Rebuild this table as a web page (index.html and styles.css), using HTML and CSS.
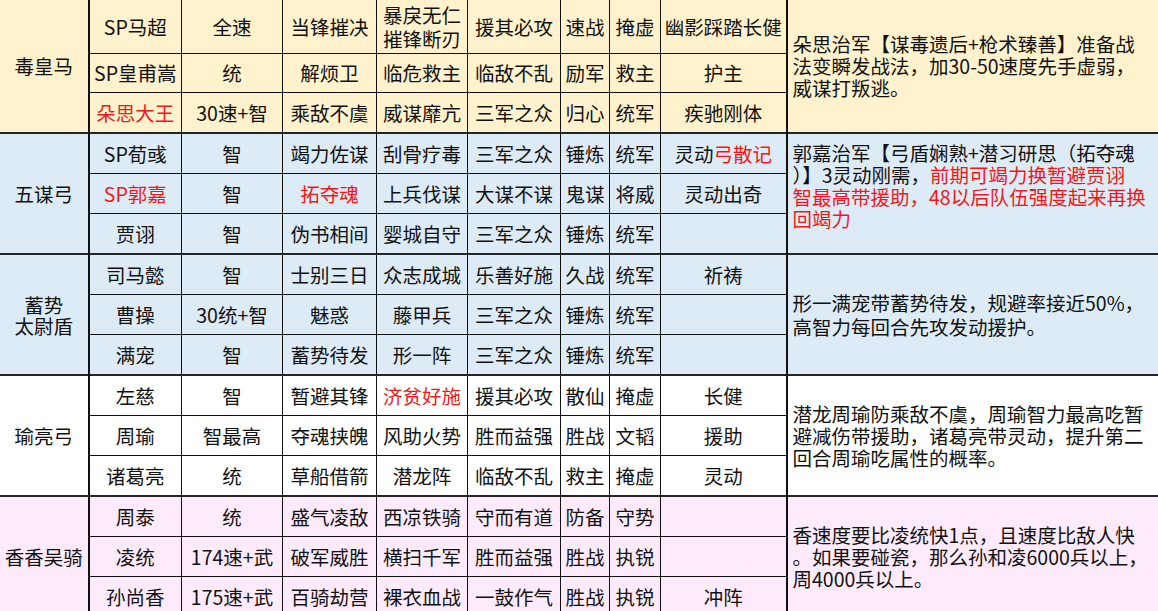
FILE: index.html
```html
<!DOCTYPE html>
<html lang="zh-CN">
<head>
<meta charset="utf-8">
<title>阵容表</title>
<link rel="stylesheet" href="styles.css">
</head>
<body>
<table class="grid">
  <colgroup>
    <col class="c0"><col class="c1"><col class="c2"><col class="c3"><col class="c4">
    <col class="c5"><col class="c6"><col class="c7"><col class="c8"><col class="c9">
  </colgroup>
  <tbody class="g g-cream first">
    <tr class="tall">
      <td class="team" rowspan="3">毒皇马</td>
      <td>SP马超</td><td>全速</td><td>当锋摧决</td><td class="two"><span class="ln">暴戾无仁</span><span class="ln">摧锋断刃</span></td><td>援其必攻</td><td>速战</td><td>掩虚</td><td>幽影踩踏长健</td>
      <td class="note" rowspan="3"><span class="ln">朵思治军【谋毒遗后+枪术臻善】准备战</span><span class="ln">法变瞬发战法，加30-50速度先手虚弱，</span><span class="ln">威谋打叛逃。</span></td>
    </tr>
    <tr class="r39">
      <td>SP皇甫嵩</td><td>统</td><td>解烦卫</td><td>临危救主</td><td>临敌不乱</td><td>励军</td><td>救主</td><td>护主</td>
    </tr>
    <tr>
      <td class="red">朵思大王</td><td>30速+智</td><td>乘敌不虞</td><td>威谋靡亢</td><td>三军之众</td><td>归心</td><td>统军</td><td>疾驰刚体</td>
    </tr>
  </tbody>
  <tbody class="g g-blue">
    <tr>
      <td class="team" rowspan="3">五谋弓</td>
      <td>SP荀彧</td><td>智</td><td>竭力佐谋</td><td>刮骨疗毒</td><td>三军之众</td><td>锤炼</td><td>统军</td><td>灵动<span class="red">弓散记</span></td>
      <td class="note up" rowspan="3"><span class="ln">郭嘉治军【弓盾娴熟+潜习研思（拓夺魂</span><span class="ln">）】3灵动刚需，<span class="red">前期可竭力换暂避贾诩</span></span><span class="ln red">智最高带援助，48以后队伍强度起来再换</span><span class="ln red">回竭力</span></td>
    </tr>
    <tr>
      <td class="red">SP郭嘉</td><td>智</td><td class="red">拓夺魂</td><td>上兵伐谋</td><td>大谋不谋</td><td>鬼谋</td><td>将威</td><td>灵动出奇</td>
    </tr>
    <tr>
      <td>贾诩</td><td>智</td><td>伪书相间</td><td>婴城自守</td><td>三军之众</td><td>锤炼</td><td>统军</td><td></td>
    </tr>
  </tbody>
  <tbody class="g g-blue">
    <tr>
      <td class="team two tight" rowspan="3"><span class="ln">蓄势</span><span class="ln">太尉盾</span></td>
      <td>司马懿</td><td>智</td><td>士别三日</td><td>众志成城</td><td>乐善好施</td><td>久战</td><td>统军</td><td>祈祷</td>
      <td class="note" rowspan="3"><span class="ln wide">形一满宠带蓄势待发，规避率接近50%，</span><span class="ln wide">高智力每回合先攻发动援护。</span></td>
    </tr>
    <tr>
      <td>曹操</td><td>30统+智</td><td>魅惑</td><td>藤甲兵</td><td>三军之众</td><td>锤炼</td><td>统军</td><td></td>
    </tr>
    <tr>
      <td>满宠</td><td>智</td><td>蓄势待发</td><td>形一阵</td><td>三军之众</td><td>锤炼</td><td>统军</td><td></td>
    </tr>
  </tbody>
  <tbody class="g g-white">
    <tr>
      <td class="team" rowspan="3">瑜亮弓</td>
      <td>左慈</td><td>智</td><td>暂避其锋</td><td class="red">济贫好施</td><td>援其必攻</td><td>散仙</td><td>掩虚</td><td>长健</td>
      <td class="note" rowspan="3"><span class="ln">潜龙周瑜防乘敌不虞，周瑜智力最高吃暂</span><span class="ln">避减伤带援助，诸葛亮带灵动，提升第二</span><span class="ln">回合周瑜吃属性的概率。</span></td>
    </tr>
    <tr>
      <td>周瑜</td><td>智最高</td><td>夺魂挟魄</td><td>风助火势</td><td>胜而益强</td><td>胜战</td><td>文韬</td><td>援助</td>
    </tr>
    <tr>
      <td>诸葛亮</td><td>统</td><td>草船借箭</td><td>潜龙阵</td><td>临敌不乱</td><td>救主</td><td>掩虚</td><td>灵动</td>
    </tr>
  </tbody>
  <tbody class="g g-pink">
    <tr>
      <td class="team" rowspan="3">香香吴骑</td>
      <td>周泰</td><td>统</td><td>盛气凌敌</td><td>西凉铁骑</td><td>守而有道</td><td>防备</td><td>守势</td><td></td>
      <td class="note" rowspan="3"><span class="ln">香速度要比凌统快1点，且速度比敌人快</span><span class="ln">。如果要碰瓷，那么孙和凌6000兵以上，</span><span class="ln">周4000兵以上。</span></td>
    </tr>
    <tr>
      <td>凌统</td><td>174速+武</td><td>破军威胜</td><td>横扫千军</td><td>胜而益强</td><td>胜战</td><td>执锐</td><td></td>
    </tr>
    <tr>
      <td>孙尚香</td><td>175速+武</td><td>百骑劫营</td><td>裸衣血战</td><td>一鼓作气</td><td>胜战</td><td>执锐</td><td>冲阵</td>
    </tr>
  </tbody>
</table>
</body>
</html>
```

FILE: styles.css
```css
html, body {
  margin: 0;
  padding: 0;
  background: #ffffff;
  overflow: hidden;
}

.grid {
  border-collapse: collapse;
  table-layout: fixed;
  width: 1166px;
  margin: -1px 0 0 -1px;
  font-family: "Noto Sans CJK SC", "Noto Sans", sans-serif;
  font-size: 19.5px;
  color: #111111;
}

.c0 { width: 89px; }
.c1 { width: 93px; }
.c2 { width: 101px; }
.c3 { width: 94px; }
.c4 { width: 91px; }
.c5 { width: 93px; }
.c6 { width: 49px; }
.c7 { width: 51px; }
.c8 { width: 126px; }
.c9 { width: 379px; }

.grid td {
  border: 1px solid #111111;
  height: 39px;
  padding: 0 2px;
  text-align: center;
  vertical-align: middle;
  line-height: 22px;
  white-space: nowrap;
  overflow: hidden;
}

.grid tr.tall td { height: 53px; }
.grid tr.r39 td { height: 38px; }

.ln {
  display: block;
  height: 22px;
  line-height: 22px;
}

.two .ln {
  height: 24px;
  line-height: 24px;
}

.tight .ln {
  height: 21px;
  line-height: 21px;
}

.grid td.team {
  border-right: 2px solid #111111;
}

.grid td.note {
  text-align: left;
  padding: 0 0 0 5px;
  border-left: 2px solid #111111;
}

.grid td.note.up {
  padding-bottom: 15px;
}

.note .ln.wide {
  height: 23.5px;
  line-height: 23.5px;
}

.g tr:first-child td {
  border-top: 2px solid #262626;
}
.g.first tr:first-child td {
  border-top: 1px solid #111111;
}

.g-cream td { background: #fff2cc; }
.g-blue td { background: #ddebf7; }
.g-white td { background: #ffffff; }
.g-pink td { background: #fdebfb; }

.red { color: #f01818; }
```
